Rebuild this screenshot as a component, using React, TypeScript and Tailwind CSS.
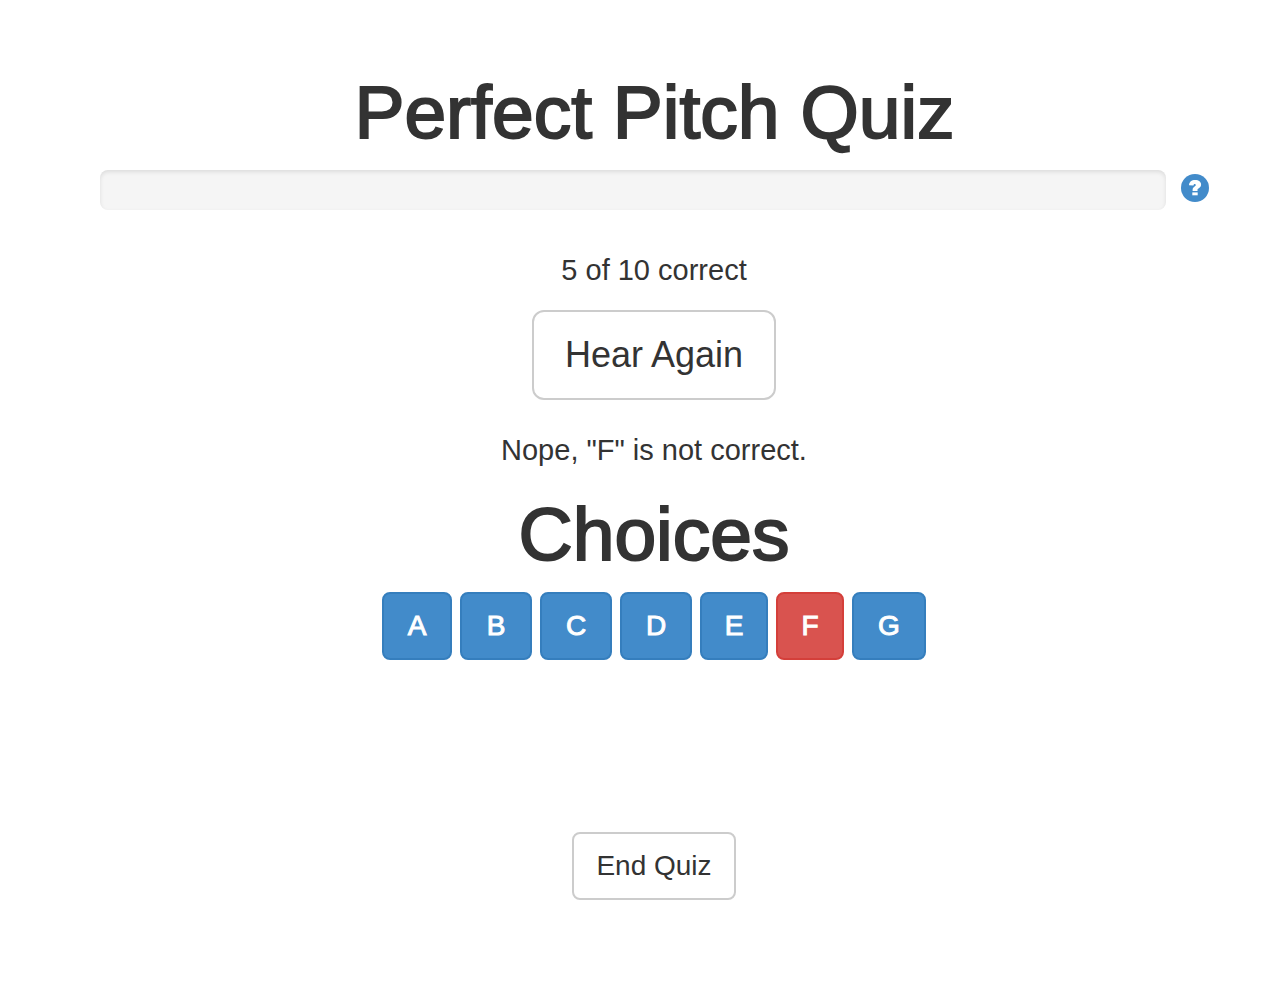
import { useState } from "react";

interface Choice {
  note: string;
  width: string;
}

const CHOICES: Choice[] = [
  { note: "A", width: "w-[70px]" },
  { note: "B", width: "w-[72px]" },
  { note: "C", width: "w-[72px]" },
  { note: "D", width: "w-[72px]" },
  { note: "E", width: "w-[68px]" },
  { note: "F", width: "w-[68px]" },
  { note: "G", width: "w-[74px]" },
];

const DEFAULT_BUTTON = "border-2 border-[#ccc] bg-white text-[#333] hover:bg-[#ebebeb]";
const PRIMARY_BUTTON = "border-[#357ebd] bg-[#428bca] hover:bg-[#3276b1]";
const DANGER_BUTTON = "border-[#d43f3a] bg-[#d9534f] hover:bg-[#d2322d]";

// The heading weight sits between regular and bold, so regular gets a thin stroke.
const HEADING = "text-[75px] leading-[76px] font-normal [-webkit-text-stroke:2px_#333]";

function QuestionIcon() {
  return (
    <svg viewBox="0 0 28 28" className="block size-7" aria-hidden="true">
      <circle cx="14" cy="14" r="14" fill="#428bca" />
      <path
        d="M8 11.3C8.2 7.9 10.5 6 14.2 6c3.6 0 5.9 1.8 5.9 4.5 0 1.900-.9 2.900-2.300 3.800-1.100.7-1.300 1-1.300 1.800v.9h-4.900v-1.100c0-1.800.7-2.600 2-3.500.9-.6 1.200-.9 1.200-1.400 0-.6-.4-.9-1-.9-.8 0-1.200.5-1.300 1.500z"
        fill="#fff"
      />
      <rect x="11.3" y="18.4" width="5.4" height="2.9" fill="#fff" />
    </svg>
  );
}

export default function App() {
  const [picked, setPicked] = useState("F");

  return (
    <div className="min-h-screen bg-white pt-[74px] pb-[92px] pl-[100px] text-center font-['Liberation_Sans',Arial,sans-serif] text-[29px] leading-10 text-[#333]">
      <header className="pr-[59px]">
        <h1 className={HEADING}>Perfect Pitch Quiz</h1>

        <div className="mt-5 flex items-start gap-[15px]">
          <div
            role="progressbar"
            aria-label="Quiz progress"
            aria-valuenow={0}
            aria-valuemin={0}
            aria-valuemax={10}
            className="h-10 flex-1 rounded-lg bg-[#f5f5f5] shadow-[inset_0_2px_4px_rgba(0,0,0,0.1)]"
          />
          <button type="button" aria-label="Help" className="mt-1 shrink-0 rounded-full">
            <QuestionIcon />
          </button>
        </div>
      </header>

      <main className="flex flex-col items-center pt-10 pr-[60px]">
        <p>5 of 10 correct</p>

        <button type="button" className={`mt-5 h-[90px] w-[244px] rounded-xl text-[36px] ${DEFAULT_BUTTON}`}>
          Hear Again
        </button>

        <p className="mt-[30px]">Nope, "{picked}" is not correct.</p>

        <h2 className={`mt-[26px] ${HEADING}`}>Choices</h2>

        <div className="mt-5 flex flex-wrap justify-center gap-2">
          {CHOICES.map(({ note, width }) => (
            <button
              key={note}
              type="button"
              onClick={() => setPicked(note)}
              className={`h-[68px] rounded-lg border-2 text-[28px] text-white [-webkit-text-stroke:1px_#fff] ${width} ${note === picked ? DANGER_BUTTON : PRIMARY_BUTTON}`}
            >
              {note}
            </button>
          ))}
        </div>

        <button type="button" className={`mt-[172px] h-[68px] w-[164px] rounded-lg text-[28px] ${DEFAULT_BUTTON}`}>
          End Quiz
        </button>
      </main>
    </div>
  );
}
